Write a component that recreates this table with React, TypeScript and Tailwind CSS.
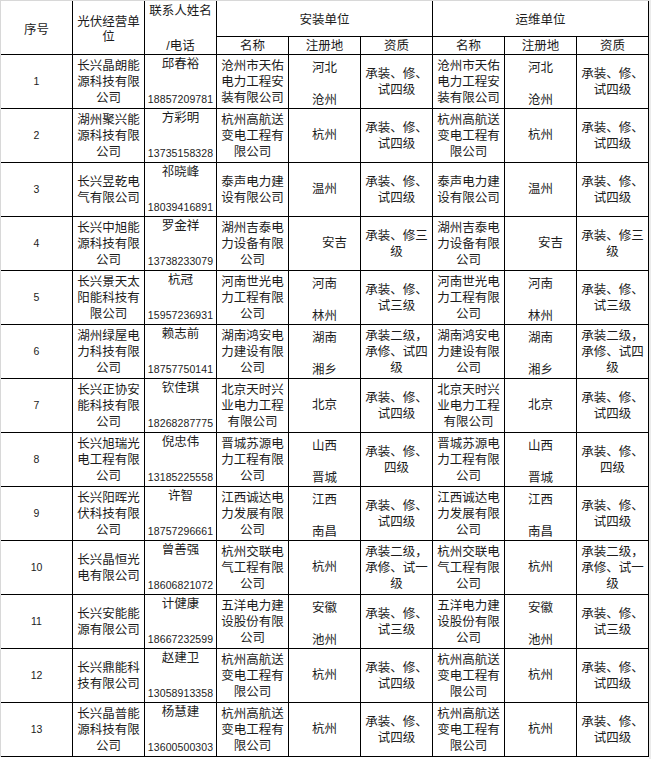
type Row = {
  no: number;
  company: string[];
  contact: string;
  phone: string;
  unit: string[];
  place: string[];
  shift?: boolean;
  quality: string[];
};

const HANGZHOU_GH = ["杭州高航送", "变电工程有", "限公司"];
const Q4 = ["承装、修、", "试四级"];
const Q3 = ["承装、修、", "试三级"];

const rows: Row[] = [
  { no: 1, company: ["长兴晶朗能", "源科技有限", "公司"], contact: "邱春裕", phone: "18857209781", unit: ["沧州市天佑", "电力工程安", "装有限公司"], place: ["河北", "沧州"], quality: Q4 },
  { no: 2, company: ["湖州聚兴能", "源科技有限", "公司"], contact: "方彩明", phone: "13735158328", unit: HANGZHOU_GH, place: ["杭州"], quality: Q4 },
  { no: 3, company: ["长兴昱乾电", "气有限公司"], contact: "祁晓峰", phone: "18039416891", unit: ["泰声电力建", "设有限公司"], place: ["温州"], quality: Q4 },
  { no: 4, company: ["长兴中旭能", "源科技有限", "公司"], contact: "罗金祥", phone: "13738233079", unit: ["湖州吉泰电", "力设备有限", "公司"], place: ["安吉"], shift: true, quality: ["承装、修三", "级"] },
  { no: 5, company: ["长兴景天太", "阳能科技有", "限公司"], contact: "杭冠", phone: "15957236931", unit: ["河南世光电", "力工程有限", "公司"], place: ["河南", "林州"], quality: Q3 },
  { no: 6, company: ["湖州绿屋电", "力科技有限", "公司"], contact: "赖志前", phone: "18757750141", unit: ["湖南鸿安电", "力建设有限", "公司"], place: ["湖南", "湘乡"], quality: ["承装二级，", "承修、试四", "级"] },
  { no: 7, company: ["长兴正协安", "能科技有限", "公司"], contact: "钦佳琪", phone: "18268287775", unit: ["北京天时兴", "业电力工程", "有限公司"], place: ["北京"], quality: Q4 },
  { no: 8, company: ["长兴旭瑞光", "电工程有限", "公司"], contact: "倪忠伟", phone: "13185225558", unit: ["晋城苏源电", "力工程有限", "公司"], place: ["山西", "晋城"], quality: ["承装、修、", "四级"] },
  { no: 9, company: ["长兴阳晖光", "伏科技有限", "公司"], contact: "许智", phone: "18757296661", unit: ["江西诚达电", "力发展有限", "公司"], place: ["江西", "南昌"], quality: Q4 },
  { no: 10, company: ["长兴晶恒光", "电有限公司"], contact: "曾善强", phone: "18606821072", unit: ["杭州交联电", "气工程有限", "公司"], place: ["杭州"], quality: ["承装二级，", "承修、试一", "级"] },
  { no: 11, company: ["长兴安能能", "源有限公司"], contact: "计健康", phone: "18667232599", unit: ["五洋电力建", "设股份有限", "公司"], place: ["安徽", "池州"], quality: Q3 },
  { no: 12, company: ["长兴鼎能科", "技有限公司"], contact: "赵建卫", phone: "13058913358", unit: HANGZHOU_GH, place: ["杭州"], quality: Q4 },
  { no: 13, company: ["长兴晶普能", "源科技有限", "公司"], contact: "杨慧建", phone: "13600500303", unit: HANGZHOU_GH, place: ["杭州"], quality: Q4 },
];

const cell = "border-r border-b border-black";

function Lines({ lines }: { lines: string[] }) {
  return (
    <div className={`${cell} flex flex-col items-center justify-center leading-[16px] text-center`}>
      {lines.map((l) => (
        <span key={l}>{l}</span>
      ))}
    </div>
  );
}

function Place({ place, shift }: { place: string[]; shift?: boolean }) {
  if (place.length === 2) {
    return (
      <div className={`${cell} flex flex-col items-center justify-between leading-[16px] pt-[5px]`}>
        <span>{place[0]}</span>
        <span>{place[1]}</span>
      </div>
    );
  }
  return (
    <div className={`${cell} flex items-center justify-center ${shift ? "pl-5" : ""}`}>
      {place[0]}
    </div>
  );
}

export default function App() {
  return (
    <div className="flex w-[651px] h-[759px] bg-white text-[#1c1c1c] text-[12.5px] font-['Liberation_Sans','Noto_Sans_CJK_SC',sans-serif]">
      <div className="h-[759px] shrink-0">
        <div className="grid grid-cols-[repeat(9,72px)] grid-rows-[36px_18px_repeat(13,54px)] border-l border-t border-[#d8d8d8] bg-white">
          <div className={`${cell} row-span-2 flex items-center justify-center pt-[5px]`}>序号</div>
          <div className={`${cell} row-span-2 flex flex-col items-center justify-center leading-[15px] pt-[5px]`}>
            <span>光伏经营单</span>
            <span>位</span>
          </div>
          <div className={`${cell} row-span-2 flex flex-col items-center justify-between leading-[16px] pt-[2px]`}>
            <span>联系人姓名</span>
            <span>/电话</span>
          </div>
          <div className={`${cell} col-span-3 flex items-center justify-center pt-[3px]`}>安装单位</div>
          <div className={`${cell} col-span-3 flex items-center justify-center pt-[3px]`}>运维单位</div>
          {["名称", "注册地", "资质", "名称", "注册地", "资质"].map((h, i) => (
            <div key={i} className={`${cell} flex items-center justify-center leading-[16px]`}>
              {h}
            </div>
          ))}

          {rows.map((r) => (
            <div key={r.no} className="contents">
              <div className={`${cell} flex items-center justify-center text-[10.5px]`}>{r.no}</div>
              <Lines lines={r.company} />
              <div className={`${cell} flex flex-col items-center justify-between pb-[2px]`}>
                <span className="leading-[16px] pt-[1px]">{r.contact}</span>
                <span className="text-[10.5px] leading-[13px] tracking-[0.1px]">{r.phone}</span>
              </div>
              <Lines lines={r.unit} />
              <Place place={r.place} shift={r.shift} />
              <Lines lines={r.quality} />
              <Lines lines={r.unit} />
              <Place place={r.place} shift={r.shift} />
              <Lines lines={r.quality} />
            </div>
          ))}
        </div>
      </div>
      <div className="flex-1 bg-[#ebebeb]" />
    </div>
  );
}
